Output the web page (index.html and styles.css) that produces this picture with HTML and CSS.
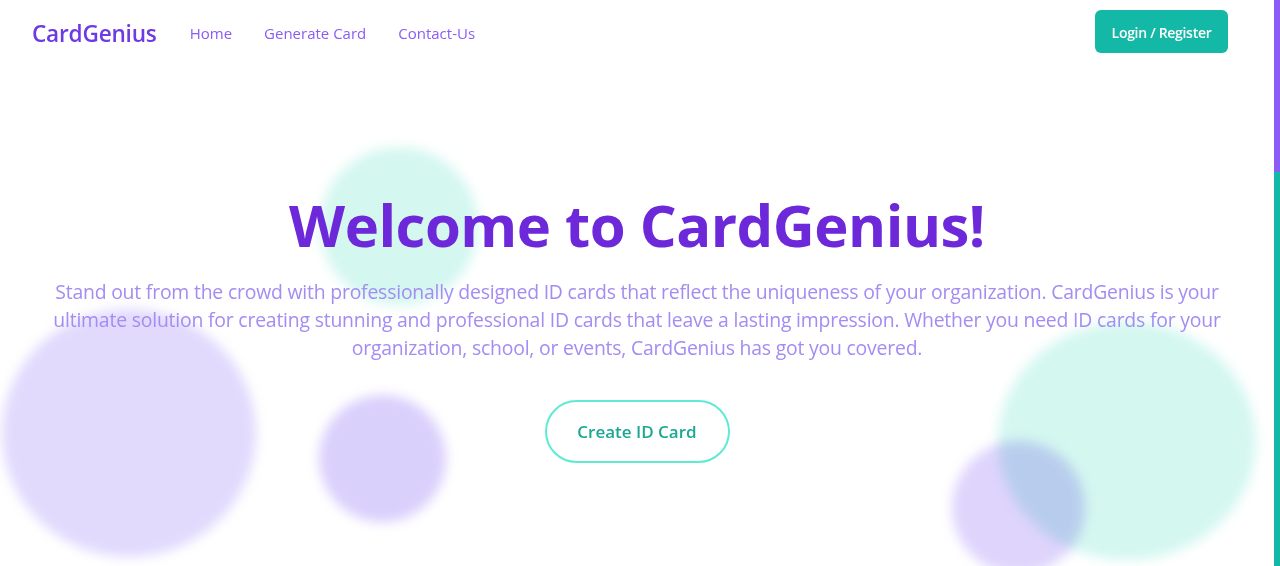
FILE: index.html
```html
<!DOCTYPE html>
<html lang="en">
<head>
<meta charset="utf-8">
<title>CardGenius</title>
<link rel="stylesheet" href="styles.css">
</head>
<body>
<div class="page">
  <header class="nav">
    <div class="nav-left">
      <a class="logo" href="#">CardGenius</a>
      <nav class="links">
        <a href="#">Home</a>
        <a href="#">Generate Card</a>
        <a href="#">Contact-Us</a>
      </nav>
    </div>
    <a class="login" href="#">Login / Register</a>
  </header>

  <main class="hero">
    <div class="blob blob-teal-top"></div>
    <div class="blob blob-purple-big"></div>
    <div class="blob blob-purple-small"></div>
    <div class="blob blob-teal-right"></div>
    <div class="blob blob-purple-right"></div>

    <h1 class="title">Welcome to CardGenius!</h1>
    <p class="lead">Stand out from the crowd with professionally designed ID cards that reflect the uniqueness of your organization. CardGenius is your<br>ultimate solution for creating stunning and professional ID cards that leave a lasting impression. Whether you need ID cards for your<br>organization, school, or events, CardGenius has got you covered.</p>
    <a class="cta" href="#">Create ID Card</a>
  </main>
</div>
<div class="scrollbar"><div class="thumb"></div></div>
</body>
</html>
```

FILE: styles.css
```css
* { box-sizing: border-box; }
html, body { margin: 0; padding: 0; background: #ffffff; }
body {
  font-family: "Open Sans", "Noto Sans", "Liberation Sans", sans-serif;
  overflow: hidden;
  height: 566px;
}
a { text-decoration: none; }

.page {
  width: 1274px;
  height: 566px;
  position: relative;
  overflow: hidden;
}

.nav {
  display: flex;
  align-items: center;
  justify-content: space-between;
  height: 64px;
  padding: 0 46px 0 32px;
  position: relative;
  z-index: 2;
}
.nav-left { display: flex; align-items: center; padding-top: 2px; }
.logo {
  font-size: 22.6px;
  font-weight: 600;
  color: #6d3ae4;
  letter-spacing: -0.2px;
  margin-right: 33px;
}
.links { display: flex; gap: 32px; }
.links a {
  font-size: 15px;
  color: #8b5cf6;
}
.login {
  background: #14b8a6;
  color: #ffffff;
  font-size: 14px;
  font-weight: 600;
  padding: 1px 16px 0;
  height: 43px;
  width: 133px;
  display: flex;
  align-items: center;
  justify-content: center;
  border-radius: 6px;
  margin-top: -1px;
  letter-spacing: -0.3px;
}

.hero {
  position: relative;
  height: 502px;
  display: flex;
  flex-direction: column;
  align-items: center;
  padding-top: 124px;
}
.blob {
  position: absolute;
  border-radius: 50%;
  filter: blur(6px);
  z-index: 0;
}
.blob-teal-top {
  left: 320px; top: 83px; width: 158px; height: 158px;
  background: #d4f7f0;
}
.blob-purple-big {
  left: 2px; top: 245px; width: 254px; height: 248px;
  background: #e1dafd;
}
.blob-purple-small {
  left: 319px; top: 331px; width: 127px; height: 127px;
  background: #dad0fc;
}
.blob-teal-right {
  left: 998px; top: 258px; width: 258px; height: 238px;
  background: #d4f7f0;
}
.blob-purple-right {
  left: 952px; top: 377px; width: 133px; height: 133px;
  background: #dbd0fc;
  mix-blend-mode: multiply;
  opacity: 0.9;
}

.title {
  position: relative;
  z-index: 1;
  margin: 0;
  font-size: 58px;
  font-weight: 700;
  color: #6d28d9;
  line-height: 74px;
  letter-spacing: -0.5px;
}
.lead {
  position: relative;
  z-index: 1;
  margin: 16px 0 0;
  text-align: center;
  font-size: 19.4px;
  line-height: 28px;
  color: #a48cf2;
  white-space: nowrap;
  letter-spacing: -0.2px;
}
.cta {
  position: relative;
  z-index: 1;
  margin-top: 38px;
  width: 185px;
  height: 63px;
  border: 2px solid #5eead4;
  border-radius: 32px;
  display: flex;
  align-items: center;
  justify-content: center;
  color: #1ba893;
  font-size: 17px;
  font-weight: 600;
  background: transparent;
}

.scrollbar {
  position: fixed;
  top: 0; right: 0;
  width: 6px; height: 566px;
  background: #14b8a6;
}
.thumb {
  width: 6px;
  height: 172px;
  background: #8b5cf6;
}
```
